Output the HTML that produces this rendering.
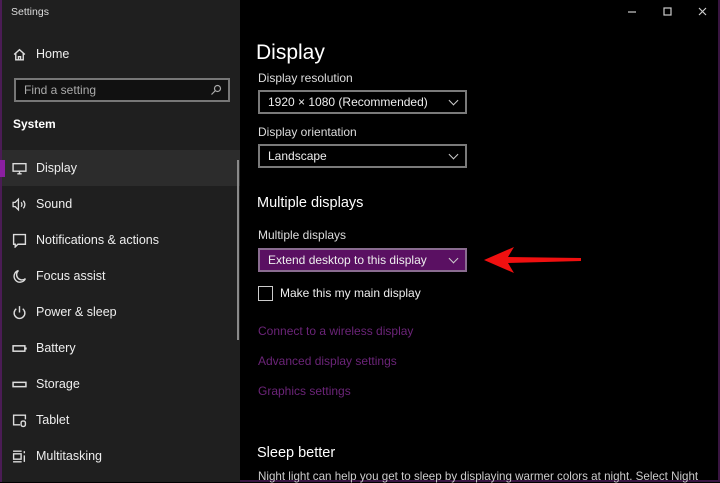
<!DOCTYPE html>
<html><head><meta charset="utf-8"><style>
*{margin:0;padding:0;box-sizing:border-box}
body{width:720px;height:482px;overflow:hidden;background:#000;font-family:"Liberation Sans",sans-serif;position:relative;color:#fff}
.side{position:absolute;left:0;top:0;width:240px;height:482px;background:#1f1f1f;border-left:2px solid #4b1c55}
.t{position:absolute;font-size:11px;color:#ddd}
.nav{position:absolute;left:0;width:238px;height:36px;font-size:12.5px;color:#eee;display:flex;align-items:center}
.nav svg{position:absolute;left:10px;width:15px;height:15px}
.nav span{position:absolute;left:34px}
.dd{position:absolute;left:258px;width:209px;height:24px;border:2px solid #7a7a7a;font-size:12px;padding-left:8px;line-height:20px;color:#eee}
.dd i{position:absolute;right:8px;top:5px;width:7px;height:7px;border-right:1.3px solid #ccc;border-bottom:1.3px solid #ccc;transform:rotate(45deg)}
.lbl{position:absolute;left:258px;font-size:12px;color:#ddd}
.link{position:absolute;left:258px;font-size:12px;color:#6b2478}
</style></head><body>
<div class="side">
<div class="t" style="left:9px;top:6px;font-size:10.5px">Settings</div>
<div class="nav" style="top:36px"><svg viewBox="0 0 14 14" fill="none" stroke="#ddd" stroke-width="1.3"><path d="M2 7L7 2.5 12 7M3.5 6v6h7V6M6 12V9h2v3"/></svg><span style="font-size:12.5px">Home</span></div>
<div style="position:absolute;left:12px;top:78px;width:216px;height:24px;border:2px solid #777;background:#111;font-size:12px;color:#aaa;padding-left:8px;line-height:20px">Find a setting<svg style="position:absolute;right:6px;top:4px" width="12" height="12" viewBox="0 0 12 12" fill="none" stroke="#aaa" stroke-width="1.2"><circle cx="7.5" cy="4.5" r="3"/><path d="M5.5 6.5L1.5 10.5"/></svg></div>
<div class="t" style="left:11px;top:117px;font-size:12px;font-weight:bold;color:#fff">System</div>
<div class="nav" style="top:150px;background:#2c2c2c"><div style="position:absolute;left:-2px;top:10px;width:5px;height:17px;background:#8b1fa0"></div><svg viewBox="0 0 14 14" fill="none" stroke="#ddd" stroke-width="1.3"><rect x="1" y="2.5" width="12" height="7"/><path d="M5 12h4M7 9.5v2.5"/></svg><span>Display</span></div>
<div class="nav" style="top:186px"><svg viewBox="0 0 14 14" fill="none" stroke="#ddd" stroke-width="1.2"><path d="M1 5h2l3-3v10L3 9H1z"/><path d="M8.5 5c1 1 1 3 0 4M10.5 3.5c2 2 2 5 0 7"/></svg><span>Sound</span></div>
<div class="nav" style="top:222px"><svg viewBox="0 0 14 14" fill="none" stroke="#ddd" stroke-width="1.3"><path d="M1.5 1.5h11v9h-7l-2.5 2.5v-2.5H1.5z"/></svg><span>Notifications &amp; actions</span></div>
<div class="nav" style="top:258px"><svg viewBox="0 0 14 14" fill="none" stroke="#ddd" stroke-width="1.3"><path d="M6 1.5A5.5 5.5 0 1 0 12.5 9 4.5 4.5 0 0 1 6 1.5z"/></svg><span>Focus assist</span></div>
<div class="nav" style="top:294px"><svg viewBox="0 0 14 14" fill="none" stroke="#ddd" stroke-width="1.3"><path d="M4 3.5a5 5 0 1 0 6 0M7 1v6"/></svg><span>Power &amp; sleep</span></div>
<div class="nav" style="top:330px"><svg viewBox="0 0 14 14" fill="none" stroke="#ddd" stroke-width="1.4"><rect x="1" y="4.5" width="11" height="5"/><path d="M13 6v2"/></svg><span>Battery</span></div>
<div class="nav" style="top:366px"><svg viewBox="0 0 14 14" fill="none" stroke="#ddd" stroke-width="1.4"><rect x="1" y="5" width="12" height="4"/></svg><span>Storage</span></div>
<div class="nav" style="top:402px"><svg viewBox="0 0 14 14" fill="none" stroke="#ddd" stroke-width="1.3"><path d="M12.5 6V2H1.5v9h6"/><rect x="8.5" y="7.5" width="4" height="5" rx="1.5"/></svg><span>Tablet</span></div>
<div class="nav" style="top:438px"><svg viewBox="0 0 14 14" fill="none" stroke="#ddd" stroke-width="1.3"><path d="M1 2h8M1 12h8"/><rect x="1.5" y="4.5" width="7" height="5"/><path d="M11.5 2v2M11.5 6v6"/></svg><span>Multitasking</span></div>
<div style="position:absolute;left:235px;top:160px;width:2px;height:180px;background:#8a8a8a"></div>
</div>
<div style="position:absolute;right:0;top:0;width:2px;height:482px;background:#3a1542"></div>
<div style="position:absolute;left:240px;bottom:0;width:480px;height:2px;background:#3a1542"></div>
<svg style="position:absolute;left:625px;top:6px" width="90" height="12" viewBox="0 0 90 12" fill="none" stroke="#ccc" stroke-width="1.2"><path d="M3 6h8"/><rect x="39" y="2" width="7" height="7"/><path d="M74 2l7 7M81 2l-7 7"/></svg>
<div style="position:absolute;left:256px;top:41px;font-size:21px;color:#fff">Display</div>
<div class="lbl" style="top:71px">Display resolution</div>
<div class="dd" style="top:90px">1920 × 1080 (Recommended)<i></i></div>
<div class="lbl" style="top:125px">Display orientation</div>
<div class="dd" style="top:144px">Landscape<i></i></div>
<div style="position:absolute;left:257px;top:195px;font-size:14.5px;color:#fff">Multiple displays</div>
<div class="lbl" style="top:228px">Multiple displays</div>
<div class="dd" style="top:248px;background:#5a1062;border-color:#8a6c90">Extend desktop to this display<i></i></div>
<div style="position:absolute;left:258px;top:286px;width:15px;height:15px;border:1.5px solid #ccc"></div>
<div class="lbl" style="left:280px;top:286px;color:#eee">Make this my main display</div>
<div class="link" style="top:324px">Connect to a wireless display</div>
<div class="link" style="top:354px">Advanced display settings</div>
<div class="link" style="top:384px">Graphics settings</div>
<div style="position:absolute;left:257px;top:445px;font-size:14.5px;color:#fff">Sleep better</div>
<div class="lbl" style="top:470px;color:#ccc;font-size:11.6px">Night light can help you get to sleep by displaying warmer colors at night. Select Night</div>
<svg style="position:absolute;left:0;top:0" width="720" height="482"><polygon points="484,260 514,247 508,257 581,258 581,261 508,263 514,273" fill="#f01010"/></svg>
</body></html>
